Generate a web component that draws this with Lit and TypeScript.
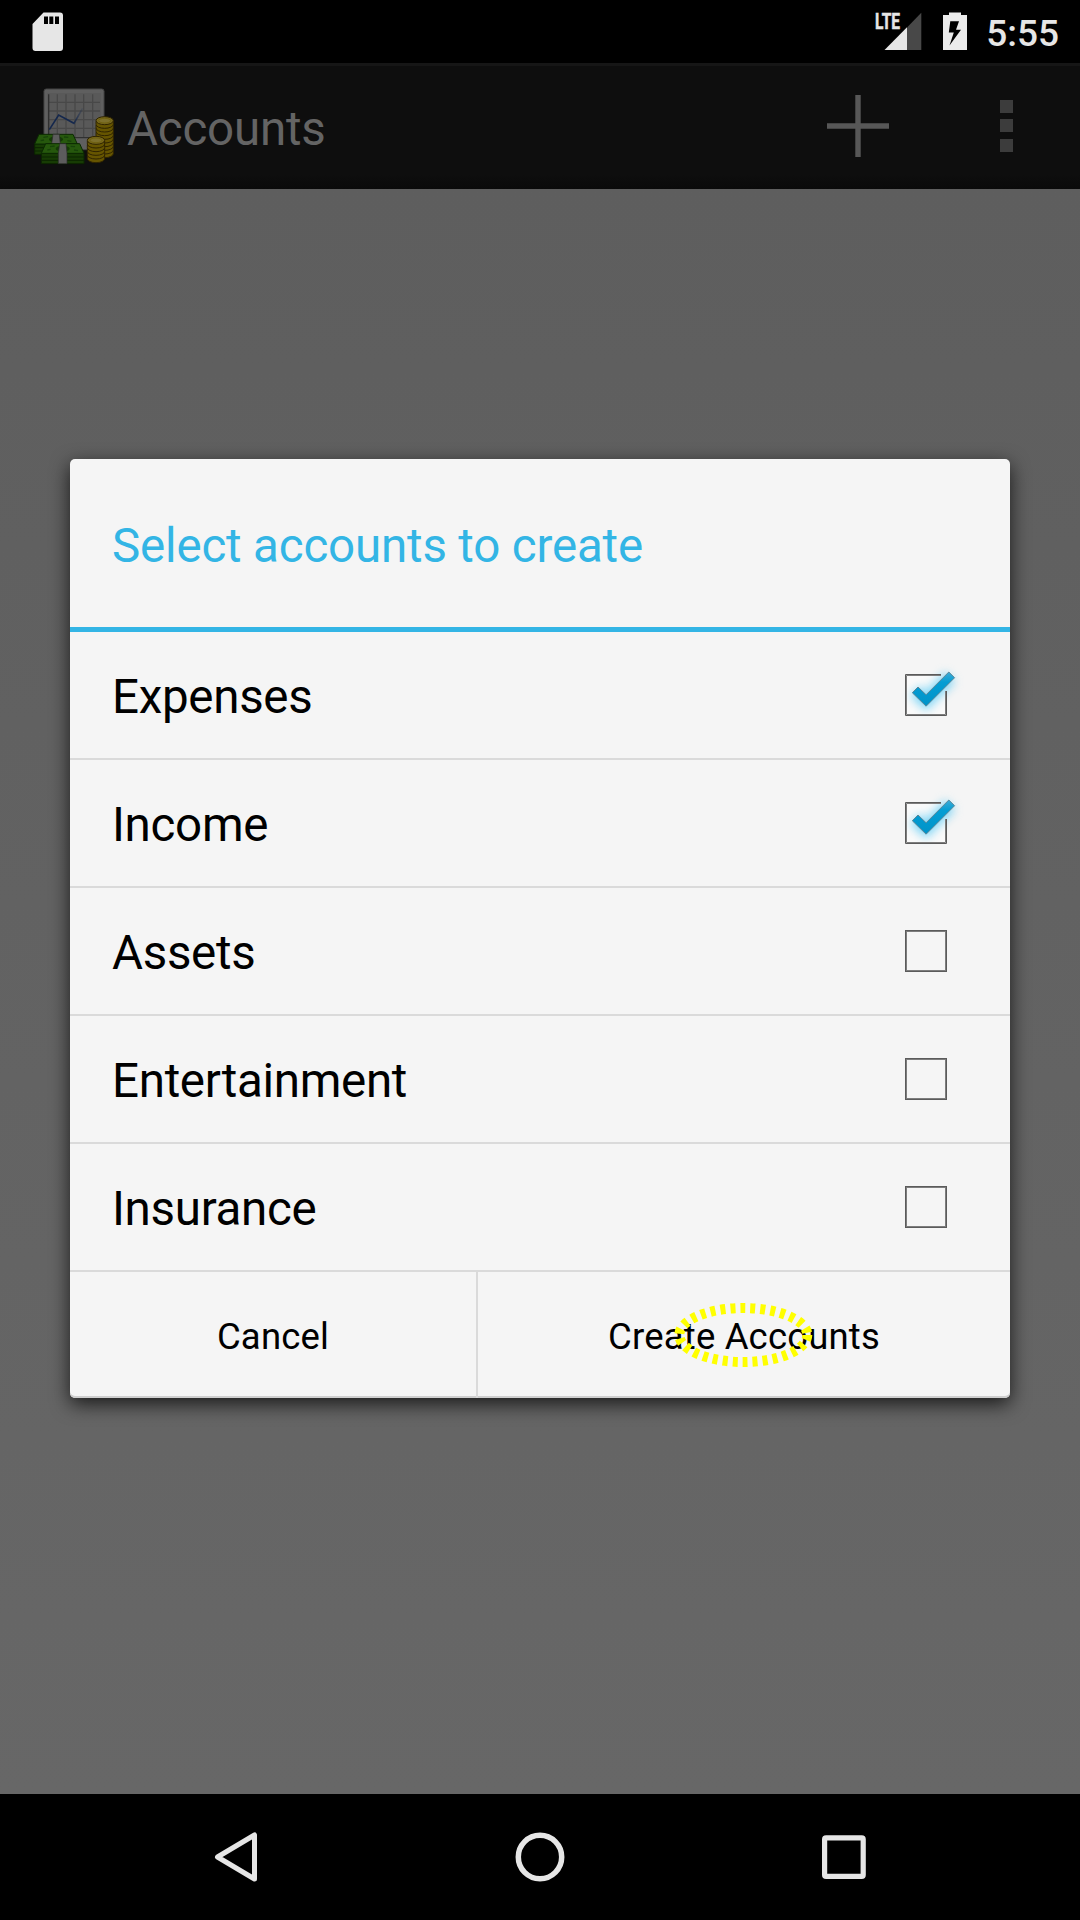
import { LitElement, html, css, svg } from "lit";
import { customElement, property, state } from "lit/decorators.js";

@customElement("status-bar")
class StatusBar extends LitElement {
  static styles = css`
    :host {
      display: flex;
      align-items: flex-start;
      height: 63px;
      box-sizing: border-box;
      padding: 12px 21px 0 32px;
      background: #000;
      color: #e6e6e6;
    }
    .spacer { flex: 1; }
    .signal { margin-right: 21px; overflow: visible; }
    .time {
      font: 500 37px/42px Roboto, sans-serif;
      margin-left: 19px;
      padding-top: 1px;
      white-space: nowrap;
    }
    svg { display: block; }
  `;
  render() {
    return html`
      <svg width="31" height="39" viewBox="0 0 31 39">
        <path fill="#e6e6e6" fill-rule="evenodd" d="M11.500 .5H28a3 3 0 0 1 3 3V36a3 3 0 0 1-3 3H3.500a3 3 0 0 1-3-3V12zM12 4.500V12H16V4.500zM17.300 4.500V12H21.300V4.500zM23 4.500V12H27V4.500z"></path>
      </svg>
      <div class="spacer"></div>
      <svg class="signal" width="52" height="39" viewBox="-6 0 52 39">
        <path fill="#484848" d="M45.300 .8V38H31V15.500z"></path>
        <path fill="#e6e6e6" d="M31 15.200V38H8.500z"></path>
        <text x="-1" y="17.200" fill="#e6e6e6" stroke="#e6e6e6" stroke-width=".5" font-family="Roboto, sans-serif" font-weight="700" font-size="22" textLength="25" lengthAdjust="spacingAndGlyphs">LTE</text>
      </svg>
      <svg width="24" height="39" viewBox="0 0 24 39">
        <path fill="#ebebeb" fill-rule="evenodd" d="M6 .5H18V3H24V38H0V3H6zM7.300 9.200L5.800 20.500H10.800L6.500 33.500L18 17.800H13L16 9.200z"></path>
      </svg>
      <span class="time">5:55</span>
    `;
  }
}

@customElement("action-bar")
class ActionBar extends LitElement {
  static styles = css`
    :host {
      display: flex;
      align-items: center;
      height: 126px;
      box-sizing: border-box;
      border-top: 3px solid #161616;
      padding: 0 67px 0 32px;
      background: linear-gradient(#0e0e0e 88%, #0a0a0a);
    }
    .title {
      flex: 1;
      font: 400 47.500px/56px Roboto, sans-serif;
      letter-spacing: -0.2px;
      color: #646464;
      margin-left: 11px;
      padding-top: 2px;
    }
    .more {
      display: grid;
      gap: 6.500px;
      margin-left: 111px;
      margin-top: -4px;
    }
    .dot { width: 13px; height: 13px; background: #3c3c3c; }
    svg { display: block; }
    .logo { margin-top: -2px; }
    .plus { margin-top: -3px; }
  `;

  private bundle(x: number, y: number, w: number) {
    return svg`
      <g transform="translate(${x} ${y})">
        <path fill="#173c04" stroke="#0b2401" stroke-width="3" d="M0 29V60H${w}V29z"></path>
        <path fill="#26580d" stroke="#0b2a02" stroke-width="3" d="M13 0H${w - 13}L${w} 29H0z"></path>
        <path fill="none" stroke="#0b2401" stroke-width="3" d="M0 40H${w}M0 50H${w}"></path>
        <path fill="none" stroke="#17420a" stroke-width="4" d="M18 19l10-2M26 9l14-2M${w - 30} 19l12 2M${w - 40} 8l13 1"></path>
        <ellipse cx="${w / 2}" cy="15" rx="21" ry="9" fill="#143a06"></ellipse>
        <path fill="#5c5c5c" stroke="#2b2b2b" stroke-width="2" d="M${w / 2 - 9} 0h19l3 29v31h-26v-31z"></path>
      </g>`;
  }

  private coins(x: number, y: number, count: number) {
    const rings = Array.from({ length: count }, (_, i) => count - i);
    return svg`
      <g stroke="#2f2400" stroke-width="3">
        ${rings.map((i) => svg`<path fill="#665500" d="M${x - 26} ${y + i * 11 - 9}v9a26 12 0 0 0 52 0v-9z"></path>`)}
        <ellipse cx="${x}" cy="${y}" rx="26" ry="12" fill="#77681d"></ellipse>
        <ellipse cx="${x}" cy="${y}" rx="18" ry="7" fill="#7d702b" stroke="#6a5a08" stroke-width="2"></ellipse>
      </g>`;
  }

  render() {
    return html`
      <svg class="logo" width="84" height="80" viewBox="36 36 252 240">
        <defs>
          <linearGradient id="ink" x1="0" x2="1">
            <stop offset=".7" stop-color="#14274c"></stop>
            <stop offset="1" stop-color="#14274c" stop-opacity=".15"></stop>
          </linearGradient>
        </defs>
        <rect x="72" y="42" width="180" height="182" rx="7" fill="#5f5f5f" stroke="#454545" stroke-width="3"></rect>
        <rect x="82" y="54" width="160" height="133" fill="#595959"></rect>
        <path fill="none" stroke="#484848" stroke-width="4" d="M112 58V186M138 58V186M165 58V186M191 58V186M218 58V186M86 82H240M86 108H240M86 134H240M86 160H240"></path>
        <path fill="none" stroke="#303030" stroke-width="4" d="M86 58V188H240"></path>
        <path fill="none" stroke="url(#ink)" stroke-width="5" d="M88 164L116 120L162 145L188 100"></path>
        ${this.bundle(44, 178, 128)}
        ${this.bundle(64, 206, 128)}
        ${this.coins(254, 137, 9)}
        ${this.coins(228, 196, 5)}
      </svg>
      <span class="title">Accounts</span>
      <svg class="plus" width="62" height="62" viewBox="0 0 62 62">
        <path fill="#575757" d="M28.300 0h5.400v28.300H62v5.400H33.700V62H28.300V33.700H0V28.300H28.300z"></path>
      </svg>
      <div class="more"><i class="dot"></i><i class="dot"></i><i class="dot"></i></div>
    `;
  }
}

@customElement("check-mark")
class CheckMark extends LitElement {
  @property({ type: Boolean }) checked = false;
  static styles = css`
    :host { display: block; width: 42px; height: 42px; }
    svg { display: block; overflow: visible; }
    .glow { filter: blur(5px); }
  `;
  render() {
    return html`
      <svg width="42" height="42" viewBox="0 0 42 42">
        ${this.checked
          ? svg`
            <defs>
              <linearGradient id="tick" x1="0" y1="0" x2="0" y2="1">
                <stop offset="0" stop-color="#3fabd5"></stop>
                <stop offset=".3" stop-color="#049dd3"></stop>
                <stop offset="1" stop-color="#0093c8"></stop>
              </linearGradient>
            </defs>
            <rect x="1.500" y="1.500" width="39" height="39" fill="#fafafa"></rect>
            <path class="glow" fill="none" stroke="#45c4f5" stroke-opacity=".65" stroke-width="14" d="M10 17L21 27L45 3"></path>
            <path fill="none" stroke="#5b5b5b" d="M36 .5H.5V41.500H41.500V17"></path>
            <path fill="none" stroke="#7d7d7d" d="M36 1.500H1.500V40.500H40.500V17"></path>
            <path fill="url(#tick)" stroke="#5a8799" stroke-width="1" stroke-linejoin="round" d="M7.300 18.700L13 13L21.100 20.800L43.800 -2L49.600 3.700L21.100 32.200z"></path>`
          : svg`
            <rect x=".5" y=".5" width="41" height="41" fill="none" stroke="#5b5b5b"></rect>
            <rect x="1.500" y="1.500" width="39" height="39" fill="none" stroke="#7d7d7d"></rect>`}
      </svg>`;
  }
}

interface Account { name: string; checked: boolean; }

@customElement("account-dialog")
class AccountDialog extends LitElement {
  @state() private accounts: Account[] = [
    { name: "Expenses", checked: true },
    { name: "Income", checked: true },
    { name: "Assets", checked: false },
    { name: "Entertainment", checked: false },
    { name: "Insurance", checked: false },
  ];

  static styles = css`
    :host {
      display: flex;
      flex-direction: column;
      width: 940px;
      height: 939px;
      border-radius: 5px;
      background: #f5f5f5;
      color: #000;
      box-shadow: 0 6px 19px rgba(0, 0, 0, 0.75);
      font: 400 47.500px/56px Roboto, sans-serif;
    }
    .heading {
      height: 173px;
      box-sizing: border-box;
      padding: 5px 42px 0;
      border-bottom: 5px solid #33b5e5;
      display: flex;
      align-items: center;
      color: #33b5e5;
      letter-spacing: -0.18px;
    }
    .row {
      height: 128px;
      box-sizing: border-box;
      border-bottom: 2px solid #dadada;
      padding: 0 63px 0 42px;
      display: flex;
      align-items: center;
      justify-content: space-between;
    }
    .label { padding-top: 4px; letter-spacing: -0.3px; }
    .buttons {
      display: flex;
      flex: 1;
      border-radius: 0 0 5px 5px;
      box-shadow: inset 0 -2px 0 #cfcfcf;
    }
    .button {
      display: flex;
      align-items: center;
      justify-content: center;
      font-size: 36.500px;
      letter-spacing: 0.17px;
      line-height: 42px;
      padding-top: 3px;
      box-sizing: border-box;
    }
    .cancel { width: 408px; border-right: 2px solid #dadada; }
    .create { flex: 1; position: relative; }
    .ring { position: absolute; left: 193px; top: 28px; }
  `;

  private toggle(index: number) {
    this.accounts = this.accounts.map((a, i) => (i === index ? { ...a, checked: !a.checked } : a));
  }

  render() {
    return html`
      <div class="heading">Select accounts to create</div>
      ${this.accounts.map(
        (a, i) => html`
          <div class="row" @click=${() => this.toggle(i)}>
            <span class="label">${a.name}</span>
            <check-mark ?checked=${a.checked}></check-mark>
          </div>`
      )}
      <div class="buttons">
        <div class="button cancel">Cancel</div>
        <div class="button create">
          Create Accounts
          <svg class="ring" width="144" height="70" viewBox="0 0 144 70">
            <ellipse cx="72.300" cy="35" rx="64" ry="27" fill="none" stroke="#ff0" stroke-width="10" stroke-dasharray="5 5"></ellipse>
          </svg>
        </div>
      </div>
    `;
  }
}

@customElement("navigation-bar")
class NavigationBar extends LitElement {
  static styles = css`
    :host {
      display: flex;
      align-items: center;
      justify-content: space-between;
      height: 126px;
      box-sizing: border-box;
      padding: 0 211px;
      background: #000;
    }
    svg { display: block; }
  `;
  render() {
    return html`
      <svg width="50" height="52" viewBox="0 0 50 52" fill="none" stroke="#e6e6e6" stroke-width="5" stroke-linejoin="round">
        <path d="M43.500 4V48L6.500 26z"></path>
      </svg>
      <svg width="50" height="50" viewBox="0 0 50 50" fill="none" stroke="#e6e6e6" stroke-width="5.500">
        <circle cx="25" cy="25" r="21.700"></circle>
      </svg>
      <svg width="50" height="50" viewBox="0 0 50 50" fill="none" stroke="#e6e6e6" stroke-width="5.200">
        <rect x="5.600" y="5.800" width="38.600" height="38.600" rx="1.500"></rect>
      </svg>
    `;
  }
}

@customElement("app-root")
class AppRoot extends LitElement {
  static styles = css`
    :host {
      display: flex;
      flex-direction: column;
      width: 1080px;
      height: 1920px;
      overflow: hidden;
    }
    .content {
      flex: 1;
      display: flex;
      flex-direction: column;
      align-items: center;
      padding-top: 270px;
      box-sizing: border-box;
      background: linear-gradient(#5e5e5e, #676767);
    }
  `;
  render() {
    return html`
      <status-bar></status-bar>
      <action-bar></action-bar>
      <main class="content"><account-dialog></account-dialog></main>
      <navigation-bar></navigation-bar>
    `;
  }
}
